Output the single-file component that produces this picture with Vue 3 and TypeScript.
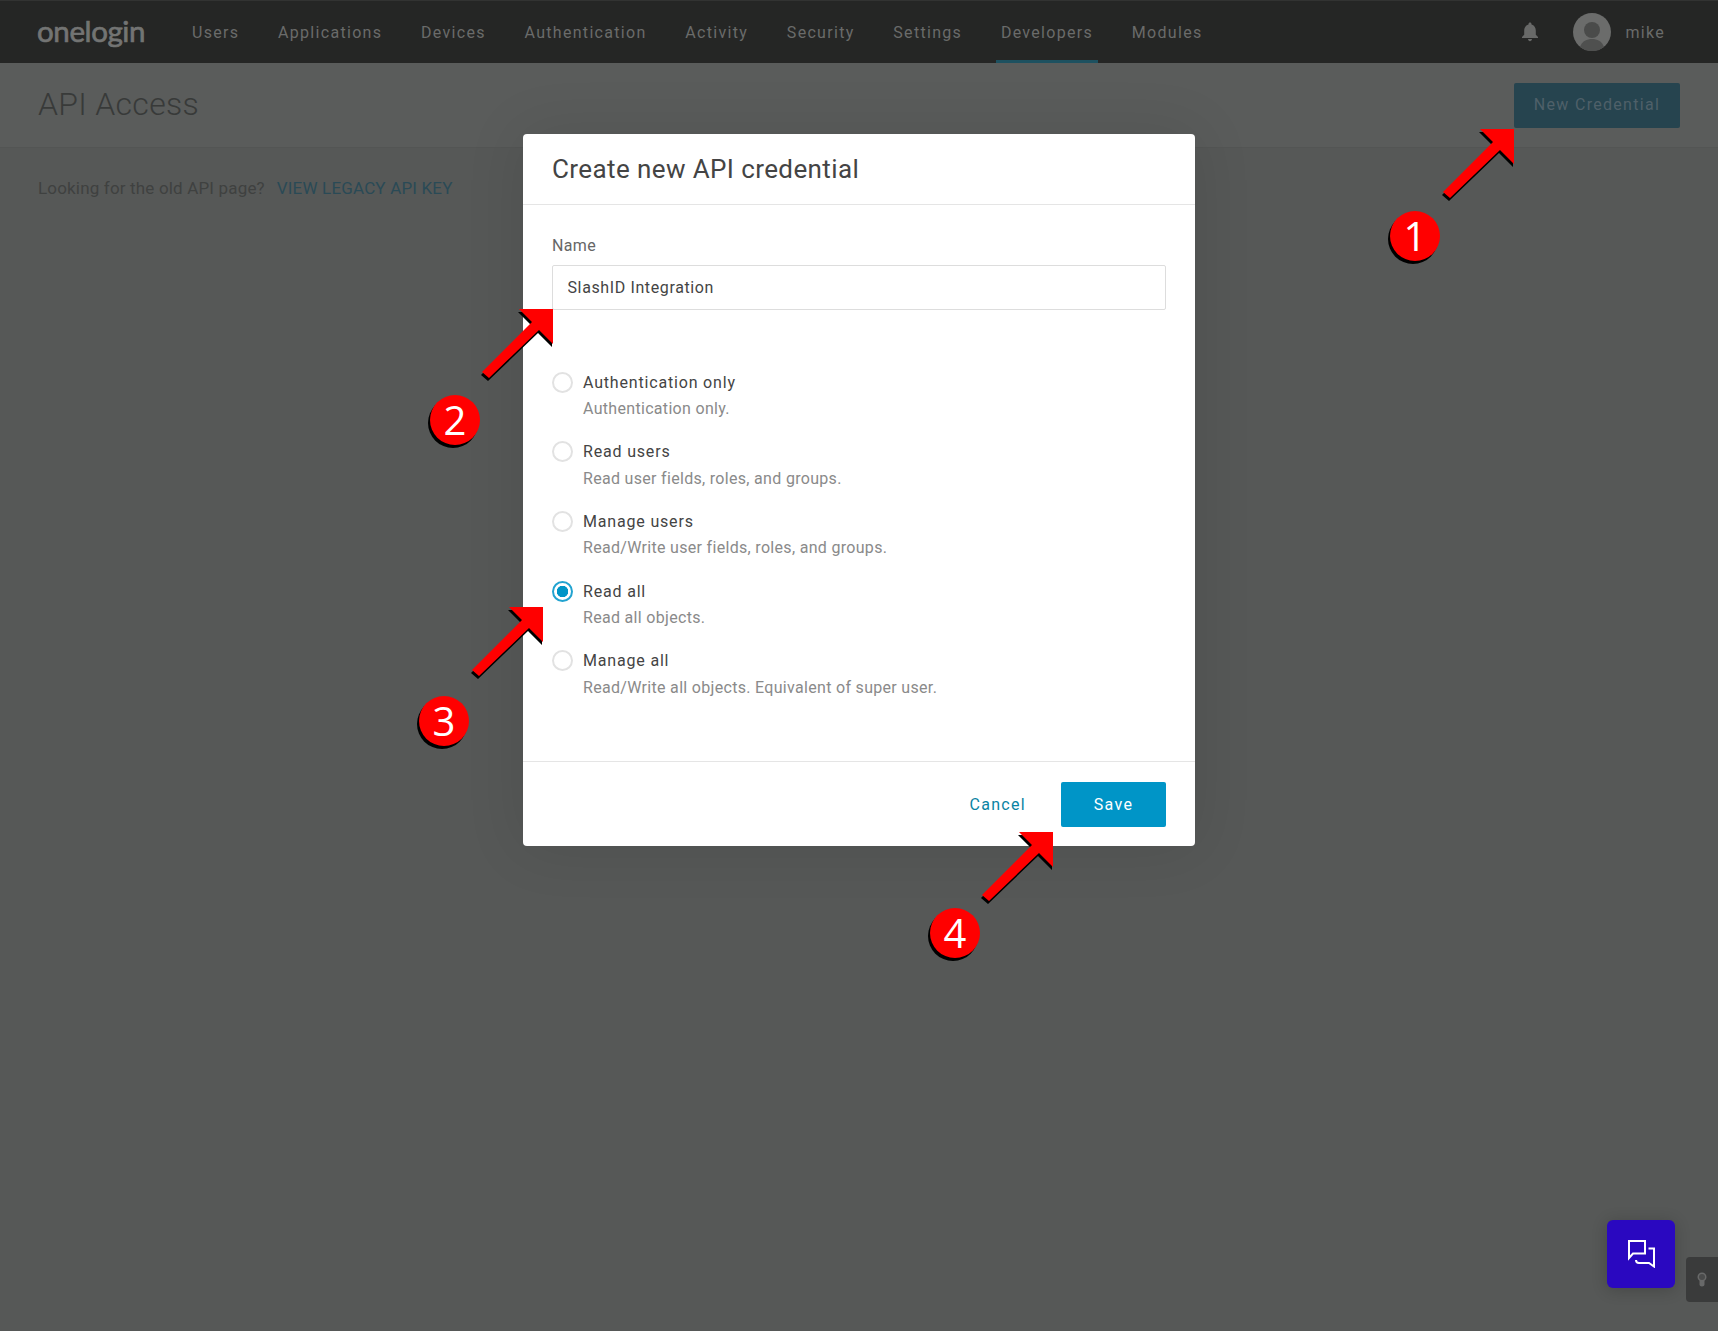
<script setup lang="ts">
interface Scope { title: string; desc: string; checked?: boolean }
const navItems: string[] = ['Users', 'Applications', 'Devices', 'Authentication', 'Activity', 'Security', 'Settings', 'Developers', 'Modules']
const scopes: Scope[] = [
  { title: 'Authentication only', desc: 'Authentication only.' },
  { title: 'Read users', desc: 'Read user fields, roles, and groups.' },
  { title: 'Manage users', desc: 'Read/Write user fields, roles, and groups.' },
  { title: 'Read all', desc: 'Read all objects.', checked: true },
  { title: 'Manage all', desc: 'Read/Write all objects. Equivalent of super user.' },
]
const arrows = [
  { x: 1514, y: 129 },
  { x: 553, y: 309 },
  { x: 543, y: 607 },
  { x: 1053, y: 832 },
]
const badges = [
  { n: '1', x: 1415, y: 236 },
  { n: '2', x: 455, y: 420 },
  { n: '3', x: 444, y: 721 },
  { n: '4', x: 955, y: 933 },
]
const head = '-34,0 0,0 0,35 -14,21 -64,69 -71,63 -21,13'
</script>

<template>
  <div class="page">
    <header class="nav">
      <div class="logo">onelogin</div>
      <nav class="menu">
        <a v-for="item in navItems" :key="item" class="menu-item" :class="{ active: item === 'Developers' }">{{ item }}</a>
      </nav>
      <div class="nav-right">
        <svg class="bell" width="18" height="20" viewBox="0 0 18 20"><path fill="#686968" d="M9 0.5c-.9 0-1.5.7-1.5 1.5v.5C4.8 3.2 3.2 5.6 3.2 8.400v4.400L1 15v1h16v-1l-2.200-2.200V8.400c0-2.800-1.600-5.200-4.300-5.900V2c0-.8-.6-1.500-1.500-1.500zM7 17c0 1.200.9 2.200 2 2.200s2-1 2-2.200H7z"/></svg>
        <svg class="avatar" width="38" height="38" viewBox="0 0 38 38">
          <circle cx="19" cy="19" r="19" fill="#6b6c6b"/>
          <circle cx="19" cy="17" r="8" fill="#4a4b4a"/>
          <path d="M7 34c2-6 7-8 12-8s10 2 12 8a19 19 0 0 1-24 0z" fill="#4f504f"/>
        </svg>
        <span class="user">mike</span>
      </div>
    </header>

    <section class="head">
      <h1 class="title">API Access</h1>
      <button class="new-btn">New Credential</button>
    </section>

    <main class="body">
      <span class="legacy-q">Looking for the old API page?</span>
      <a class="legacy-link">VIEW LEGACY API KEY</a>
    </main>

    <div class="modal-layer">
      <div class="modal">
        <div class="modal-head">Create new API credential</div>
        <div class="modal-body">
          <label class="field-label">Name</label>
          <input class="field" value="SlashID Integration" />
          <div class="scopes">
            <div v-for="s in scopes" :key="s.title" class="scope">
              <span class="radio" :class="{ on: s.checked }"></span>
              <div class="scope-text">
                <div class="scope-title">{{ s.title }}</div>
                <div class="scope-desc">{{ s.desc }}</div>
              </div>
            </div>
          </div>
        </div>
        <div class="modal-foot">
          <a class="cancel">Cancel</a>
          <button class="save">Save</button>
        </div>
      </div>
    </div>

    <svg class="arrows" width="1718" height="1331" viewBox="0 0 1718 1331">
      <g v-for="(a, i) in arrows" :key="i" :transform="`translate(${a.x} ${a.y})`">
        <polygon :points="head" fill="#000" transform="translate(-1 3)"/>
        <polygon :points="head" fill="#f00"/>
      </g>
    </svg>
    <div v-for="b in badges" :key="b.n" class="badge" :style="{ left: b.x - 25 + 'px', top: b.y - 25 + 'px' }">{{ b.n }}</div>

    <button class="chat">
      <svg width="27" height="28" viewBox="0 0 27 28" fill="none" stroke="#fff" stroke-width="2">
        <path d="M1 1H17V13.500H5L1 18Z"/>
        <path d="M20.500 8.500H26V26.500L21 23H11Q8 23 8 20"/>
      </svg>
    </button>
    <div class="side-tab">
      <svg width="10" height="15" viewBox="0 0 10 15"><path fill="#686969" d="M5 .5A4.500 4.500 0 0 0 .5 5c0 1.800 1 2.800 2 3.800V12.500C2.500 13.800 3.600 14.500 5 14.500s2.500-.7 2.500-2V8.800c1-1 2-2 2-3.800A4.500 4.500 0 0 0 5 .5z"/><circle cx="5" cy="5" r="3" fill="#4a4b4b"/></svg>
    </div>
  </div>
</template>

<style>
html, body { margin: 0; background: #565857; }
</style>

<style scoped>
.page { position: relative; width: 1718px; height: 1331px; overflow: hidden; background: #565857; font-family: Roboto, "Liberation Sans", sans-serif; }
.nav { height: 63px; background: #252625; border-top: 1px solid #323332; box-sizing: border-box; display: flex; align-items: center; padding-left: 37px; padding-right: 53px; }
.logo { width: 150px; font-family: Lato, sans-serif; font-weight: 400; font-size: 29.5px; letter-spacing: -0.4px; color: #737473; -webkit-text-stroke: 0.7px #737473; line-height: 1; margin-top: -3px; }
.menu { display: flex; height: 100%; gap: 28.75px; }
.menu-item { display: flex; align-items: center; padding: 0 5px; font-size: 16px; letter-spacing: 1.3px; color: #6a6b6a; border-bottom: 3px solid transparent; box-sizing: border-box; padding-top: 3px; }
.menu-item.active { border-bottom-color: #1d5160; }
.nav-right { margin-left: auto; display: flex; align-items: center; }
.bell { margin-right: 34px; }
.avatar { margin-right: 14px; }
.user { font-size: 16px; letter-spacing: 1.3px; color: #6a6b6a; }
.head { height: 85px; background: #5a5c5b; border-bottom: 1px solid #535554; box-sizing: border-box; display: flex; align-items: center; justify-content: space-between; padding: 0 38px; }
.title { margin: -3px 0 0; font-size: 32px; font-weight: 300; letter-spacing: 0.3px; color: #383a39; }
.new-btn { width: 166px; height: 45px; margin-top: 1px; background: #26444f; border: 0; border-radius: 2px; color: #4f6069; font: 16px Roboto, sans-serif; letter-spacing: 1.3px; padding: 0 0 2px; }
.body { padding: 27px 38px; font-size: 17px; line-height: 26px; letter-spacing: 0.17px; }
.legacy-q { color: #3f4140; }
.legacy-link { color: #2a4a56; margin-left: 12px; }
.modal-layer { position: absolute; inset: 0; display: flex; justify-content: center; align-items: flex-start; padding-top: 134px; box-sizing: border-box; }
.modal { width: 672px; height: 712px; background: #fff; border-radius: 4px; box-shadow: 0 0 60px rgba(0,0,0,.1); display: flex; flex-direction: column; box-sizing: border-box; }
.modal-head { height: 71px; box-sizing: border-box; border-bottom: 1px solid #e5e5e5; padding: 0 29px; display: flex; align-items: center; font-size: 26px; color: #444; letter-spacing: 0.4px; }
.modal-body { flex: 1; padding: 28px 29px 0; box-sizing: border-box; }
.field-label { display: block; font-size: 16px; line-height: 26px; color: #666; letter-spacing: 0.35px; }
.field { display: block; width: 100%; height: 45px; margin-top: 6px; box-sizing: border-box; border: 1px solid #ddd; border-radius: 2px; padding: 0 14.5px; font: 16px Roboto, sans-serif; letter-spacing: 0.62px; color: #444; outline: none; }
.scopes { margin-top: 59.6px; display: flex; flex-direction: column; gap: 17.2px; }
.scope { display: flex; }
.radio { width: 21px; height: 21px; border-radius: 50%; border: 2px solid #e2e2e2; box-sizing: border-box; flex: none; margin-right: 10px; margin-top: 2px; }
.radio.on { border: 2px solid #22a3d0; background: radial-gradient(circle, #0095c7 0 5.500px, #fff 6px); }
.scope-title { font-size: 16px; line-height: 26.5px; color: #444; letter-spacing: 0.82px; }
.scope-desc { font-size: 16px; line-height: 26px; color: #8a8a8a; letter-spacing: 0.31px; }
.modal-foot { height: 85px; box-sizing: border-box; border-top: 1px solid #e5e5e5; padding: 20px 29px 0; display: flex; justify-content: flex-end; gap: 35px; align-items: flex-start; }
.cancel { line-height: 45px; font-size: 16px; letter-spacing: 1.3px; color: #0a83a3; }
.save { width: 105px; height: 45px; background: #0095c7; border: 0; border-radius: 2px; color: #fff; font: 16px Roboto, sans-serif; letter-spacing: 1.3px; padding: 0; }
.arrows { position: absolute; left: 0; top: 0; pointer-events: none; }
.badge { position: absolute; width: 50px; height: 50px; border-radius: 50%; background: #f00; color: #fff; font: 40px/50px "Open Sans", sans-serif; text-align: center; box-shadow: -2px 3px 0 #000; }
.chat { position: absolute; left: 1607px; top: 1220px; width: 68px; height: 68px; background: #2a08c0; border: 0; border-radius: 6px; padding: 0; display: flex; align-items: center; justify-content: center; box-shadow: 0 2px 16px rgba(0,0,0,.2); }
.side-tab { position: absolute; left: 1686px; top: 1257px; width: 32px; height: 45px; background: #3a3b3b; border-radius: 4px 0 0 4px; display: flex; align-items: center; justify-content: center; }
</style>
